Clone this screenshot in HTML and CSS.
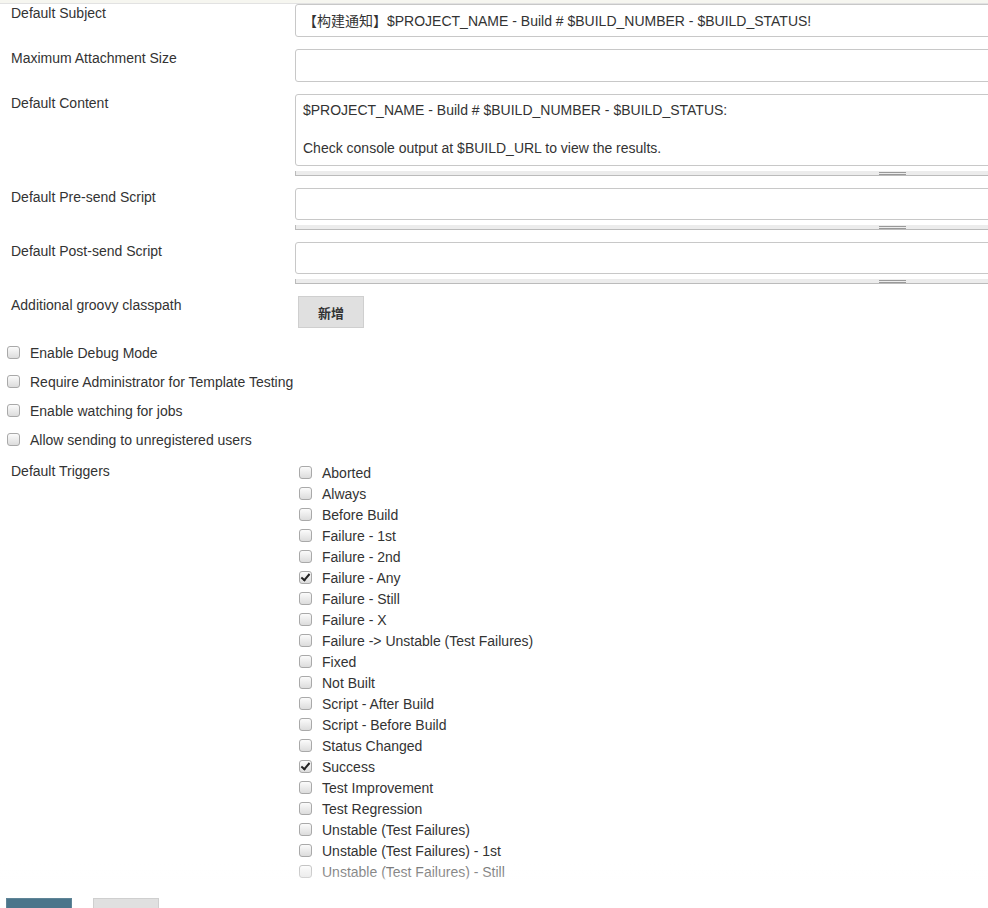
FILE: index.html
```html
<!DOCTYPE html>
<html lang="zh-CN">
<head>
    <meta charset="UTF-8">
    <meta name="viewport" content="width=device-width, initial-scale=1.0">
    <title>Extended E-mail Notification</title>
    <link rel="stylesheet" href="styles.css">
</head>
<body>
    <div class="topbar"></div>

    <div class="form">
        <div class="row">
            <div class="label">Default Subject</div>
            <div class="field">
                <input type="text" class="text" value="【构建通知】$PROJECT_NAME - Build # $BUILD_NUMBER - $BUILD_STATUS!">
            </div>
        </div>

        <div class="row">
            <div class="label">Maximum Attachment Size</div>
            <div class="field">
                <input type="text" class="text" value="">
            </div>
        </div>

        <div class="row">
            <div class="label">Default Content</div>
            <div class="field">
                <textarea class="area area-big">$PROJECT_NAME - Build # $BUILD_NUMBER - $BUILD_STATUS:

Check console output at $BUILD_URL to view the results.</textarea>
                <div class="grip"><span></span></div>
            </div>
        </div>

        <div class="row">
            <div class="label">Default Pre-send Script</div>
            <div class="field">
                <textarea class="area"></textarea>
                <div class="grip"><span></span></div>
            </div>
        </div>

        <div class="row">
            <div class="label">Default Post-send Script</div>
            <div class="field">
                <textarea class="area"></textarea>
                <div class="grip"><span></span></div>
            </div>
        </div>

        <div class="row">
            <div class="label">Additional groovy classpath</div>
            <div class="field">
                <button class="add-btn">新增</button>
            </div>
        </div>

        <div class="options">
            <label class="option"><input type="checkbox" class="cb"> Enable Debug Mode</label>
            <label class="option"><input type="checkbox" class="cb"> Require Administrator for Template Testing</label>
            <label class="option"><input type="checkbox" class="cb"> Enable watching for jobs</label>
            <label class="option"><input type="checkbox" class="cb"> Allow sending to unregistered users</label>
        </div>

        <div class="row triggers-row">
            <div class="label">Default Triggers</div>
            <div class="field">
                <ul class="triggers">
                    <li><label><input type="checkbox" class="cb"> Aborted</label></li>
                    <li><label><input type="checkbox" class="cb"> Always</label></li>
                    <li><label><input type="checkbox" class="cb"> Before Build</label></li>
                    <li><label><input type="checkbox" class="cb"> Failure - 1st</label></li>
                    <li><label><input type="checkbox" class="cb"> Failure - 2nd</label></li>
                    <li><label><input type="checkbox" class="cb" checked> Failure - Any</label></li>
                    <li><label><input type="checkbox" class="cb"> Failure - Still</label></li>
                    <li><label><input type="checkbox" class="cb"> Failure - X</label></li>
                    <li><label><input type="checkbox" class="cb"> Failure -&gt; Unstable (Test Failures)</label></li>
                    <li><label><input type="checkbox" class="cb"> Fixed</label></li>
                    <li><label><input type="checkbox" class="cb"> Not Built</label></li>
                    <li><label><input type="checkbox" class="cb"> Script - After Build</label></li>
                    <li><label><input type="checkbox" class="cb"> Script - Before Build</label></li>
                    <li><label><input type="checkbox" class="cb"> Status Changed</label></li>
                    <li><label><input type="checkbox" class="cb" checked> Success</label></li>
                    <li><label><input type="checkbox" class="cb"> Test Improvement</label></li>
                    <li><label><input type="checkbox" class="cb"> Test Regression</label></li>
                    <li><label><input type="checkbox" class="cb"> Unstable (Test Failures)</label></li>
                    <li><label><input type="checkbox" class="cb"> Unstable (Test Failures) - 1st</label></li>
                    <li><label><input type="checkbox" class="cb"> Unstable (Test Failures) - Still</label></li>
                </ul>
            </div>
        </div>
    </div>

    <!-- barre de boutons collée en bas -->
    <div class="bottom-bar">
        <button class="btn-save" aria-label="保存"></button>
        <button class="btn-apply" aria-label="应用"></button>
    </div>
</body>
</html>
```

FILE: styles.css
```css
:root {
    --text: #333;
    --border: #c8c8c8;
    --label-width: 284px;
}

html, body {
    overflow: hidden;
}

body {
    margin: 0;
    font-family: "Liberation Sans", Arial, "Noto Sans CJK SC", sans-serif;
    font-size: 14px;
    color: var(--text);
    background: #fff;
}

.topbar {
    height: 3px;
    background: #f6f6f0;
    border-bottom: 1px solid #e2e2e2;
}

.form {
    padding-left: 11px;
    width: 1500px;
}

.row {
    display: grid;
    grid-template-columns: var(--label-width) 1194px;
    margin-top: 12px;
}

.row:first-child {
    margin-top: 0;
}

.label {
    padding-top: 1px;
    line-height: 16px;
}

.text {
    display: block;
    box-sizing: border-box;
    width: 100%;
    height: 33px;
    margin: 0;
    padding: 0 7px 1px;
    border: 1px solid var(--border);
    border-radius: 3px;
    font: inherit;
    color: var(--text);
    outline: none;
}

.area {
    display: block;
    box-sizing: border-box;
    width: 100%;
    height: 32px;
    margin: 0;
    padding: 6px 7px;
    border: 1px solid var(--border);
    border-radius: 3px;
    font: inherit;
    line-height: 19px;
    color: var(--text);
    resize: none;
    overflow: hidden;
    outline: none;
}

.area-big {
    height: 72px;
}

.grip {
    display: flex;
    justify-content: center;
    align-items: flex-start;
    box-sizing: border-box;
    height: 5px;
    margin-top: 5px;
    padding-top: 1px;
    background: #ececec;
    border-left: 1px solid #bbb;
    border-bottom: 1px solid #bbb;
}

.grip span {
    width: 27px;
    height: 1px;
    border-top: 1px solid #999;
    border-bottom: 1px solid #999;
}

.add-btn {
    margin-left: 3px;
    width: 66px;
    height: 32px;
    padding: 0;
    background: #e0e0e0;
    border: 1px solid #cfcfcf;
    font-family: "Liberation Sans", "Noto Sans CJK SC", sans-serif;
    font-size: 13px;
    font-weight: bold;
    color: var(--text);
}

.options {
    margin-top: 15px;
    margin-left: -4px;
}

.option {
    display: flex;
    align-items: center;
    height: 19px;
    margin-bottom: 10px;
}

.cb {
    appearance: none;
    -webkit-appearance: none;
    position: relative;
    box-sizing: border-box;
    width: 13px;
    height: 13px;
    margin: 0 10px 0 0;
    border: 1px solid #a9a9a9;
    border-radius: 3px;
    background: linear-gradient(#fbfbfb, #dcdcdc);
    flex-shrink: 0;
}

.cb:checked::after {
    content: "";
    position: absolute;
    left: 3px;
    top: 0px;
    width: 3px;
    height: 7px;
    border: solid #222;
    border-width: 0 2px 2px 0;
    transform: rotate(40deg);
}

/* la marge se combine avec celle de la dernière option */
.triggers-row {
    margin-top: 13px;
}

.triggers-row .label {
    padding-top: 1px;
}

.triggers {
    list-style: none;
    margin: 0;
    padding: 0 0 0 4px;
}

.triggers li label {
    display: flex;
    align-items: center;
    height: 21px;
}

.bottom-bar {
    position: fixed;
    left: 0;
    right: 0;
    bottom: 0;
    height: 44px;
    padding-left: 6px;
    background: linear-gradient(rgba(255,255,255,0.3) 0, rgba(255,255,255,0.5) 14px, #fff 16px);
    display: flex;
    align-items: flex-start;
    gap: 21px;
}

.btn-save,
.btn-apply {
    margin-top: 34px;
    width: 66px;
    height: 32px;
    padding: 0;
}

.btn-save {
    background: #4b758b;
    border: 1px solid #5f8597;
}

.btn-apply {
    background: #e0e0e0;
    border: 1px solid #cfcfcf;
}
```
